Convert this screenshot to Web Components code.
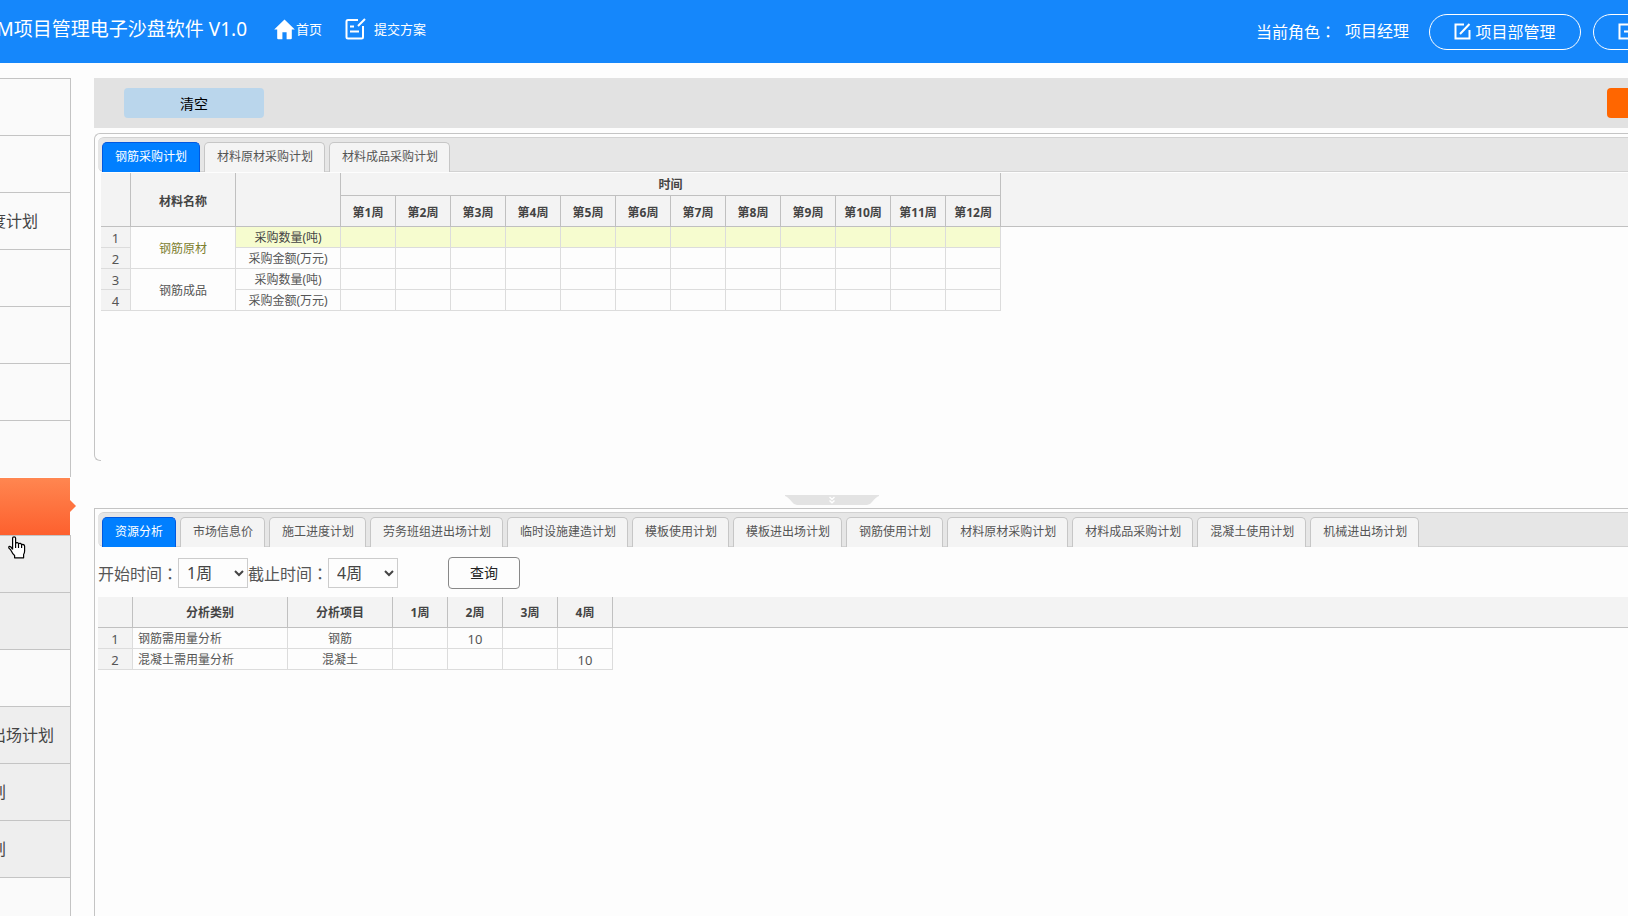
<!DOCTYPE html>
<html lang="zh-CN">
<head>
<meta charset="utf-8">
<meta name="viewport" content="width=device-width, initial-scale=1">
<title>项目管理电子沙盘软件 V1.0</title>
<style>
  html, body { margin: 0; padding: 0; }
  body {
    background: #fdfdfd;
    color: #555;
    font-family: "Noto Sans", "Noto Sans CJK SC", sans-serif;
    font-size: 12px;
    line-height: 20px;
  }
</style>
</head>
<body>
<app-shell>
  <app-header slot="header"></app-header>
  <side-nav slot="nav">
    <nav-row></nav-row>
    <nav-row></nav-row>
    <nav-row style="--inset:32px">度计划</nav-row>
    <nav-row></nav-row>
    <nav-row></nav-row>
    <nav-row></nav-row>
    <nav-row></nav-row>
    <nav-row selected></nav-row>
    <nav-row shaded></nav-row>
    <nav-row shaded></nav-row>
    <nav-row></nav-row>
    <nav-row shaded style="--inset:16px">出场计划</nav-row>
    <nav-row shaded style="--inset:64px">划</nav-row>
    <nav-row shaded style="--inset:64px">划</nav-row>
    <nav-row></nav-row>
  </side-nav>
  <tool-bar></tool-bar>
  <tab-panel rounded tabs="钢筋采购计划,材料原材采购计划,材料成品采购计划">
    <plan-table></plan-table>
  </tab-panel>
  <split-handle></split-handle>
  <tab-panel fill tabs="资源分析,市场信息价,施工进度计划,劳务班组进出场计划,临时设施建造计划,模板使用计划,模板进出场计划,钢筋使用计划,材料原材采购计划,材料成品采购计划,混凝土使用计划,机械进出场计划">
    <query-form></query-form>
    <analysis-table></analysis-table>
  </tab-panel>
</app-shell>

<script>
const define = (name, markup, setup) => {
  customElements.define(name, class extends HTMLElement {
    constructor() {
      super();
      this.attachShadow({ mode: 'open' });
    }
    connectedCallback() {
      const t = document.createElement('template');
      t.innerHTML = markup;
      this.shadowRoot.replaceChildren(t.content.cloneNode(true));
      if (setup) setup(this, this.shadowRoot);
    }
  });
};

define('app-shell', `
<style>
  :host { display: flex; flex-direction: column; height: 100vh; overflow: hidden; position: relative; }
  .body { flex: 1; min-height: 0; display: grid; grid-template-columns: 71px minmax(0, 1fr); gap: 23px; padding-top: 15px; }
  main { display: flex; flex-direction: column; min-width: 0; min-height: 0; }
</style>
<slot name="header"></slot>
<div class="body">
  <slot name="nav"></slot>
  <main><slot></slot></main>
</div>`);

define('app-header', `
<style>
  :host { display: flex; align-items: center; height: 63px; background: #1587fb; color: #fff; overflow: hidden; flex: none; }
  h1 { margin: 0; width: 247px; display: flex; justify-content: flex-end; font-size: 19px; font-weight: 400; line-height: 28px; white-space: nowrap; flex: none; padding-bottom: 6px; }
  nav { display: flex; gap: 23px; margin-left: 27px; padding-bottom: 5px; }
  a { display: flex; align-items: center; color: inherit; text-decoration: none; font-size: 13px; gap: 8px; }
  a.home { gap: 1px; }
  svg { display: block; flex: none; }
  .right { margin-left: auto; display: flex; align-items: center; font-size: 16px; line-height: 24px; white-space: nowrap; margin-right: -105px; }
  .role { display: flex; margin-right: 20px; gap: 9px; }
  .colon { font-family: "Noto Sans CJK TC", sans-serif; }
  button { font: inherit; color: inherit; background: none; border: 1px solid #fff; border-radius: 18px; height: 36px; width: 152px; padding: 0; display: flex; align-items: center; gap: 4px; flex: none; }
  button { justify-content: center; }
  button + button { margin-left: 12px; width: 140px; justify-content: flex-start; padding-left: 24px; }
</style>
<h1>M项目管理电子沙盘软件 V1.0</h1>
<nav>
  <a class="home" href="#home"><svg width="21" height="21" viewBox="0 0 21 21" fill="#fff"><path d="M10.500.4 20.800 10.400H17.800V19.200Q17.800 20.300 16.700 20.300H12.600V13.300H8.400V20.300H4.300Q3.200 20.300 3.200 19.200V10.400H.200Z"/></svg><span>首页</span></a>
  <a href="#submit"><svg width="21" height="22" viewBox="0 0 21 22" fill="none" stroke="#fff" stroke-width="2"><path d="M13 2H3Q1.500 2 1.500 3.500V19Q1.500 20.500 3 20.500H16.500Q18 20.500 18 19V8M5 8.500H9M5 13.500H14M13 8 20 1"/></svg><span>提交方案</span></a>
</nav>
<div class="right">
  <div class="role"><span>当前角色<span class="colon" lang="zh-TW">：</span></span><span>项目经理</span></div>
  <button type="button"><svg width="17" height="17" viewBox="0 0 17 17" fill="none" stroke="#fff" stroke-width="2"><path d="M10 1.500H1.500V15.500H15.500V7M6 11 15.500 1"/></svg>项目部管理</button>
  <button type="button" aria-label="退出"><svg width="17" height="17" viewBox="0 0 17 17" fill="none" stroke="#fff" stroke-width="2"><path d="M13 5V1.500H1.500V15.500H13V12M6 8.500H16"/></svg></button>
</div>`);

define('side-nav', `
<style>
  :host { display: block; position: relative; min-height: 0; }
  .pointer { position: absolute; left: 8px; top: 458px; display: block; }
</style>
<slot></slot>
<svg class="pointer" width="18" height="23" viewBox="0 0 18 23" fill="#fff" stroke="#000" stroke-width="1.200" stroke-linejoin="round"><path d="M4.600 13.500V2Q4.600.800 6.100.800T7.600 2V7.500Q8.200 6.300 9.400 6.600T10.500 8Q11.300 7 12.400 7.400T13.600 9Q14.400 8.100 15.500 8.600T16.600 10.200V15Q16.600 17 15.600 18.500V21.800H6.600V19.500Q4.500 17.800 3.600 15.600T1 12.200Q.300 10.600 1.600 10.400T4.600 13.500M7.600 7.500V12M10.500 8V12M13.600 9V12" /></svg>`);

define('nav-row', `
<style>
  :host { display: block; }
  a { box-sizing: border-box; height: 57px; display: flex; align-items: center; justify-content: flex-end; padding-right: var(--inset, 0); overflow: hidden;
      border-top: 1px solid #c4c4c4; border-right: 1px solid #c4c4c4; background: #fafafa; color: #444; font-size: 16px; white-space: nowrap; text-decoration: none; }
  :host([shaded]) a { background: #eee; }
  :host([selected]) { position: relative; margin-top: 1px; }
  :host([selected]) a { border: 0; margin-right: 1px; background: linear-gradient(#ff8650, #fd602e); }
  :host([selected])::after { content: ""; position: absolute; left: 70px; top: 22px; border: 6px solid transparent; border-left-color: #fe7340; border-right: 0; }
</style>
<a href="#plan"><slot></slot></a>`);

define('tool-bar', `
<style>
  :host { display: flex; justify-content: space-between; align-items: center; height: 50px; background: #e2e2e2; padding-left: 30px; margin-bottom: 5px; overflow: hidden; flex: none; }
  button { width: 140px; height: 30px; border: 0; border-radius: 4px; font: inherit; font-size: 14px; padding: 2px 0 0; color: #000; background: #bad6ec; flex: none; }
  .save { background: #ff6600; margin-right: -119px; }
</style>
<button type="button">清空</button>
<button type="button" class="save" aria-label="保存"></button>`);

define('tab-panel', `
<style>
  :host { display: flex; flex-direction: column; box-sizing: border-box; border: 1px solid #c4c4c4; border-right: 0; padding: 3px 0 0 3px; }
  :host([rounded]) { border-radius: 6px 0 0 6px; min-height: 328px; }
  :host([fill]) { flex: 1; min-height: 0; border-bottom: 0; }
  .tabs { box-sizing: border-box; display: flex; gap: 4px; height: 35px; padding: 4px 0 0 4px; background: #e6e6e6; border-top: 1px solid #d2d2d2; border-bottom: 1px solid #d2d2d2; border-radius: 6px 0 0 6px; flex: none; }
  button { box-sizing: border-box; height: 30px; margin: 0; padding: 0 11px 2px 12px; border: 1px solid #c6c6c6; border-bottom: 0; border-radius: 5px 5px 0 0; background: #f4f4f4; color: #555; font: inherit; white-space: nowrap; flex: none; }
  button[aria-selected="true"] { padding: 0 12px 2px; background: #007fff; border-color: #0058e0; color: #fff; }
  .content { flex: 1; min-height: 0; background: #fdfdfd; }
  :host([rounded]) .content { margin: 0 0 -1px 3px; padding-top: 1px; }
</style>
<div class="tabs" role="tablist"></div>
<div class="content"><slot></slot></div>`, (host, root) => {
  root.querySelector('.tabs').innerHTML = host.getAttribute('tabs').split(',')
    .map((t, i) => `<button type="button" role="tab" aria-selected="${i === 0}">${t}</button>`).join('');
});

define('split-handle', `
<style>
  :host { display: flex; justify-content: center; padding: 34px 58px 3px 0; flex: none; }
  svg { display: block; }
</style>
<svg width="94" height="10" viewBox="0 0 94 10"><path d="M0 0H94V1Q91 2 87 7 85 10 82 10H12Q9 10 7 7 3 2 0 1Z" fill="#e3e3e3"/><path d="M44.500 2 47 4.200 49.500 2M44.500 5.500 47 7.700 49.500 5.500" fill="none" stroke="#fff" stroke-width="1.400"/></svg>`);

const gridStyle = `
  :host { display: block; }
  table { table-layout: fixed; width: 100%; border-collapse: separate; border-spacing: 0; }
  th, td { box-sizing: border-box; padding: 2px 0 0; text-align: center; white-space: nowrap; overflow: hidden; border-right: 1px solid #dcdcdc; border-bottom: 1px solid #dcdcdc; height: 21px; line-height: 18px; font-weight: 400; color: #555; }
  thead th, thead td { background: #f3f3f3; border-color: #c0c0c0; font-weight: 700; color: #444; height: 31px; }
  tbody th { background: #f3f3f3; font-size: 13px; }
  th.rest, td.rest { border-right: 0; }
  tbody td.rest { border-bottom: 0; }
  .left { text-align: left; padding-left: 5px; }`;

define('plan-table', `
<style>${gridStyle}
  thead th { padding-top: 4px; }
  thead tr:first-child .time { height: 23px; padding-top: 2px; }
  .hot td:not(.name):not(.rest) { background: #f6fccf; color: #444; }
  .hot .name { color: #7d8030; }
</style>
<table>
  <colgroup><col style="width:30px"><col style="width:105px"><col style="width:105px"><col span="12" style="width:55px"><col></colgroup>
  <thead></thead><tbody></tbody>
</table>`, (host, root) => {
  const weeks = Array.from({ length: 12 }, (_, i) => i + 1);
  root.querySelector('thead').innerHTML =
    `<tr><td rowspan="2"></td><th rowspan="2">材料名称</th><td rowspan="2"></td><th class="time" colspan="12">时间</th><td class="rest" rowspan="2"></td></tr>
     <tr>${weeks.map(w => `<th>第${w}周</th>`).join('')}</tr>`;
  const empty = weeks.map(() => '<td></td>').join('');
  root.querySelector('tbody').innerHTML = ['钢筋原材', '钢筋成品'].map((name, i) =>
    `<tr class="${i ? '' : 'hot'}"><th>${2 * i + 1}</th><td class="name" rowspan="2">${name}</td><td>采购数量(吨)</td>${empty}<td class="rest"></td></tr>
     <tr><th>${2 * i + 2}</th><td>采购金额(万元)</td>${empty}<td class="rest"></td></tr>`).join('');
});

define('query-form', `
<style>
  form { display: flex; align-items: center; height: 48px; margin: 0; padding-top: 2px; font-size: 16px; }
  .colon { font-family: "Noto Sans CJK TC", sans-serif; }
  select { box-sizing: border-box; width: 70px; height: 30px; border: 1px solid #ccc; border-radius: 0; background: #fdfdfd; color: #444; font: inherit; padding: 0 0 0 4px; margin: 0; }
  button { box-sizing: border-box; width: 72px; height: 32px; margin-left: 50px; border: 1px solid #888; border-radius: 4px; background: #fdfdfd; color: #222; font: inherit; font-size: 14px; padding: 0; }
</style>
<form>
  <label for="from">开始时间<span class="colon" lang="zh-TW">：</span></label>
  <select id="from"><option>1周</option><option>2周</option><option>3周</option><option>4周</option></select>
  <label for="to">截止时间<span class="colon" lang="zh-TW">：</span></label>
  <select id="to"><option>1周</option><option>2周</option><option>3周</option><option selected>4周</option></select>
  <button type="button">查询</button>
</form>`);

define('analysis-table', `
<style>${gridStyle}
  tbody td.num { font-size: 13px; }
</style>
<table>
  <colgroup><col style="width:35px"><col style="width:155px"><col style="width:105px"><col span="4" style="width:55px"><col></colgroup>
  <thead><tr><td></td><th>分析类别</th><th>分析项目</th><th>1周</th><th>2周</th><th>3周</th><th>4周</th><td class="rest"></td></tr></thead>
  <tbody>
    <tr><th>1</th><td class="left">钢筋需用量分析</td><td>钢筋</td><td></td><td class="num">10</td><td></td><td></td><td class="rest"></td></tr>
    <tr><th>2</th><td class="left">混凝土需用量分析</td><td>混凝土</td><td></td><td></td><td></td><td class="num">10</td><td class="rest"></td></tr>
  </tbody>
</table>`);
</script>
</body>
</html>
